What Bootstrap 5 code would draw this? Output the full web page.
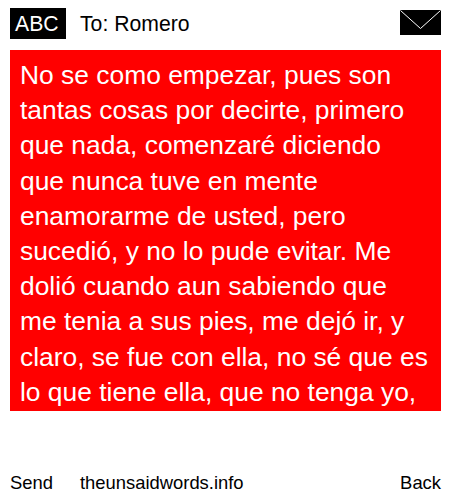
<!DOCTYPE html>
<html lang="es">
<head>
<meta charset="utf-8">
<title>Unsaid words</title>
<link href="https://cdn.jsdelivr.net/npm/bootstrap@5.3.0/dist/css/bootstrap.min.css" rel="stylesheet">
<style>
body { font-family: "Liberation Sans", Arial, sans-serif; background: #fff; color: #000; }
.phone-page { width: 450px; height: 500px; padding: 8px 9px 0 10px; overflow: hidden; }
.top-bar { height: 31px; margin-bottom: 11px; }
.abc-box { width: 56px; height: 31px; background: #000; color: #fff; font-size: 21.2px; line-height: 31px; padding-left: 5px; }
.to-line { font-size: 21.2px; line-height: 31px; margin-left: 14px; }
.env-icon { display: block; width: 41px; height: 25px; margin-top: 2px; }
.letter-box { height: 361px; background: #f00; color: #fff; font-size: 26.4px; line-height: 35.2px; padding: 8px 12px 0 10px; overflow: hidden; }
.foot-bar { font-size: 18.4px; line-height: 24px; margin-top: 60px; }
.foot-send { width: 70px; }
.foot-a { color: #000; text-decoration: none; }
</style>
</head>
<body>
<div class="phone-page d-flex flex-column">
  <div class="top-bar d-flex align-items-start">
    <div class="abc-box">ABC</div>
    <div class="to-line flex-grow-1">To: Romero</div>
    <svg class="env-icon" viewBox="0 0 41 25" aria-hidden="true">
      <rect width="41" height="25" fill="#000"/>
      <path d="M0.5 0.5 L20.5 18.5 L40.5 0.5" fill="none" stroke="#fff" stroke-width="1"/>
    </svg>
  </div>
  <div class="letter-box">No se como empezar, pues son tantas cosas por decirte, primero que nada, comenzaré diciendo que nunca tuve en mente enamorarme de usted, pero sucedió, y no lo pude evitar. Me dolió cuando aun sabiendo que me tenia a sus pies, me dejó ir, y claro, se fue con ella, no sé que es lo que tiene ella, que no tenga yo,</div>
  <div class="foot-bar d-flex">
    <a class="foot-a foot-send" href="#">Send</a>
    <a class="foot-a flex-grow-1" href="#">theunsaidwords.info</a>
    <a class="foot-a" href="#">Back</a>
  </div>
</div>
<script src="https://cdn.jsdelivr.net/npm/bootstrap@5.3.0/dist/js/bootstrap.bundle.min.js"></script>
</body>
</html>
